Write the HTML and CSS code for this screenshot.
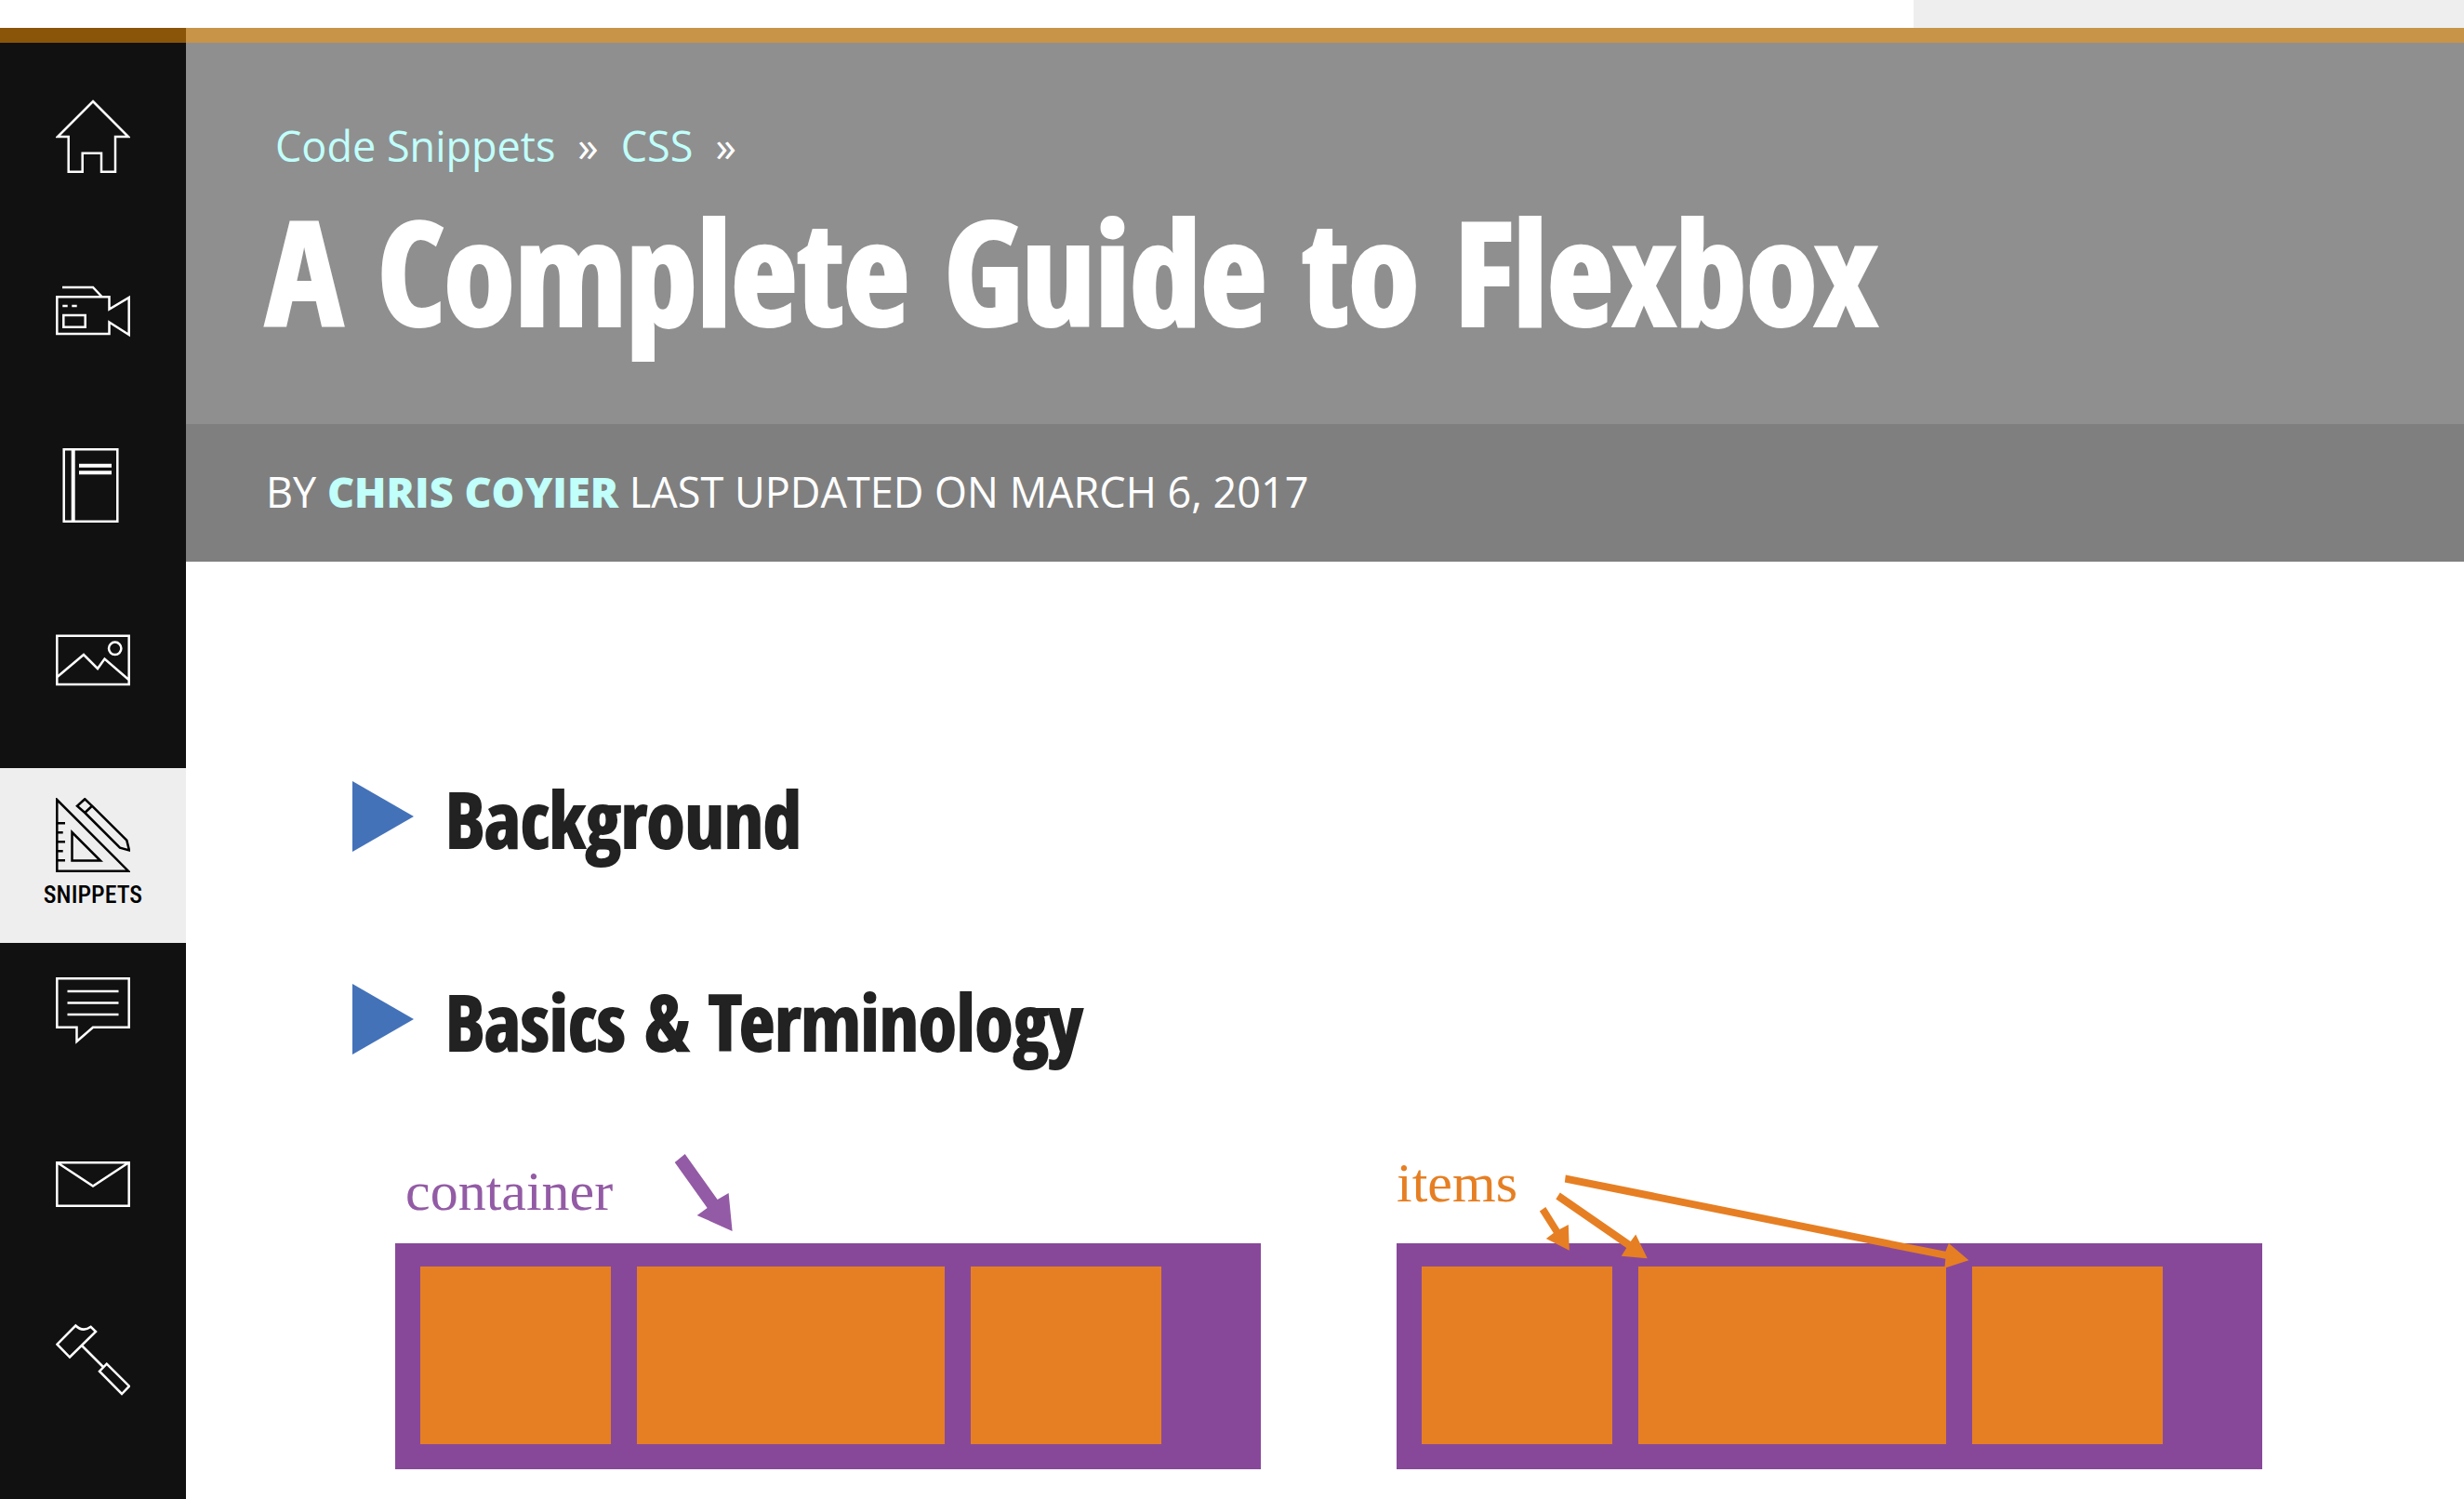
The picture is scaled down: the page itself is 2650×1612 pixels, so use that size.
FILE: index.html
```html
<!DOCTYPE html>
<html lang="en">
<head>
<meta charset="utf-8">
<title>A Complete Guide to Flexbox</title>
<link rel="stylesheet" href="styles.css">
</head>
<body>
<div class="topbar"><div class="topbar-side"></div></div>
<div class="layout">
  <nav class="sidebar" aria-label="Main">
    <a class="nav-link" href="#" aria-label="Home"><svg class="icon" viewBox="0 0 80 80"><path d="M40 3L78 41H64V78.700H49V58.700H28.700V78.700H13.700V41H2Z"/></svg></a>
    <a class="nav-link" href="#" aria-label="Videos"><svg class="icon" viewBox="0 0 80 80"><path d="M1.300 25.300H57.500V38.500L78.700 26V66L57.500 52.500V65H1.300ZM7 15H40L49.500 25M7.300 35h5.400M17.300 35h5.400M8.300 45H31.700V57.700H8.300Z"/></svg></a>
    <a class="nav-link" href="#" aria-label="Almanac"><svg class="icon" viewBox="0 0 80 80"><path d="M8.700 1.300H66.300V78.700H8.700Z"/><path class="thick" d="M18.700 1.300V78.700M25 18.700H60M25 26.300H60"/></svg></a>
    <a class="nav-link" href="#" aria-label="Gallery"><svg class="icon" viewBox="0 0 80 80"><path d="M1.300 13.700H78.700V66H1.300ZM1.500 58L30 34L45 49L52.500 38.500L78.500 61"/><circle cx="63.700" cy="27.300" r="6.700"/></svg></a>
    <a class="nav-link active" href="#" aria-current="page"><svg class="icon" viewBox="0 0 80 80"><path d="M1.300 2V78.700H78ZM1.300 27.300H10M1.300 37.300H7.700M1.300 47.300H10M1.300 57.300H7.700M1.300 67.300H10M17.500 37V67.500H48ZM31.300 1.300L23 8.700L31.300 16L39 8.700ZM39 8.700L76.300 45.700L79 56.500L69 53.700L31.300 16"/></svg><span class="nav-label">SNIPPETS</span></a>
    <a class="nav-link" href="#" aria-label="Forums"><svg class="icon" viewBox="0 0 80 80"><path d="M1.300 6.300H78.700V58.700H40L22.500 74V58.700H1.300ZM12.500 20H67.500M12.500 32.500H67.500M12.500 45H67.500"/></svg></a>
    <a class="nav-link" href="#" aria-label="Newsletter"><svg class="icon" viewBox="0 0 80 80"><path d="M1.300 16.300H78.700V62.700H1.300ZM2 16.500L40 41.500L78 16.500"/></svg></a>
    <a class="nav-link" href="#" aria-label="Jobs"><svg class="icon" viewBox="0 0 80 80"><path d="M1.500 23.700L21.300 3.500Q29 11 37.700 4.800L43 10L15 37.500ZM28 25L51 48M54.700 44.700L79 68.700L71 77L47 52.700Z"/></svg></a>
  </nav>
  <main class="main">
    <header class="hero">
      <div class="breadcrumbs"><a href="#">Code Snippets</a><span>»</span><a href="#">CSS</a><span>»</span></div>
      <h1 class="title">A Complete Guide to Flexbox</h1>
    </header>
    <p class="byline">BY <a href="#">CHRIS COYIER</a> LAST UPDATED ON MARCH 6, 2017</p>
    <article class="article">
      <h2 class="section"><svg class="marker" viewBox="0 0 66 76"><path d="M0 0L66 38L0 76Z"/></svg>Background</h2>
      <h2 class="section"><svg class="marker" viewBox="0 0 66 76"><path d="M0 0L66 38L0 76Z"/></svg>Basics &amp; Terminology</h2>
      <div class="figures">
        <figure class="figure">
          <figcaption class="caption caption-container">container</figcaption>
          <div class="flexbox"><div class="item"></div><div class="item wide"></div><div class="item"></div></div>
          <svg class="arrows purple" viewBox="0 0 932 350"><path d="M301 20L312 11L347 60L359 53L363 94L325 77L336 69Z"/></svg>
        </figure>
        <figure class="figure">
          <figcaption class="caption caption-items">items</figcaption>
          <div class="flexbox"><div class="item"></div><div class="item wide"></div><div class="item"></div></div>
          <svg class="arrows orange" viewBox="0 0 932 350"><path d="M182 33.500L591 116L594.500 107L616 125.500L590 134L591 124L181 41.500ZM176 52.500L252 105L257.500 97.500L270 123.500L242 121L247.500 112L171.500 59.500ZM160.500 68L175.500 92L185 87L186 115L161 102L169 96L154 72.500Z"/></svg>
        </figure>
      </div>
    </article>
  </main>
</div>
</body>
</html>
```
FILE: styles.css
```css
* { box-sizing: border-box; }
body {
  margin: 0;
  min-height: 100vh;
  display: flex;
  flex-direction: column;
  background: #fff;
  color: #222;
  font-family: "Open Sans", "Noto Sans", sans-serif;
}
a { text-decoration: none; }

.topbar { display: flex; justify-content: flex-end; height: 30px; }
.topbar-side { width: 592px; background: #eee; }

.layout { flex: 1; display: flex; }
.sidebar {
  flex: 0 0 200px;
  display: flex;
  flex-direction: column;
  padding-top: 28px;
  border-top: 16px solid #8a5508;
  background: #111;
}
.nav-link {
  display: flex;
  flex-direction: column;
  align-items: center;
  height: 188px;
  padding-top: 32px;
  color: #fff;
}
.nav-link.active { background: #eee; color: #000; }
.icon {
  width: 80px;
  height: 80px;
  fill: none;
  stroke: currentColor;
  stroke-width: 2.500px;
}
.icon .thick { stroke-width: 4px; }
.nav-label {
  margin-top: 8px;
  font: 500 26px/32px "Roboto Condensed", "Liberation Sans Narrow", sans-serif;
}

.main { flex: 1; min-width: 0; border-top: 16px solid #c89448; }
.hero { height: 410px; padding: 80px 86px 0; background: #8f8f8f; }
.breadcrumbs {
  display: flex;
  gap: 24px;
  padding-left: 10px;
  font-size: 45px;
  line-height: 62px;
  color: #fff;
}
.breadcrumbs a, .byline a { color: #c1fffb; }
.title {
  margin: 10px 0 0;
  color: #fff;
  font: 800 154px/184px "Open Sans Condensed", "Liberation Sans Narrow", sans-serif;
  -webkit-text-stroke: 4px currentColor;
}
.byline {
  margin: 0;
  padding: 42px 86px 44px;
  background: #7f7f7f;
  color: #fff;
  font-size: 45px;
  line-height: 62px;
}
.byline a { font-weight: 800; }

.article { padding: 226px 217px 32px 179px; }
.section {
  display: flex;
  align-items: flex-start;
  gap: 34px;
  margin: 0 0 118px;
  font: 800 83px/100px "Open Sans Condensed", "Liberation Sans Narrow", sans-serif;
  -webkit-text-stroke: 2px currentColor;
}
.marker { width: 66px; height: 76px; margin-top: 10px; fill: #4472b9; }
.figures { display: flex; gap: 146px; margin: -36px 0 0 46px; }
.figure { position: relative; flex: 1; margin: 0; }
.caption { height: 107px; font: 60px/70px "Liberation Serif", serif; }
.caption-container { padding: 16px 11px 0; color: #935ba5; }
.caption-items { padding-top: 7px; color: #e67f23; }
.flexbox { display: flex; gap: 28px; height: 243px; padding: 25px 107px 27px 27px; background: #88489a; }
.item { flex: 206; background: #e67f23; }
.item.wide { flex: 331; }
.arrows { position: absolute; top: 0; left: 0; width: 100%; }
.purple { fill: #935ba5; }
.orange { fill: #e67f23; }
```
